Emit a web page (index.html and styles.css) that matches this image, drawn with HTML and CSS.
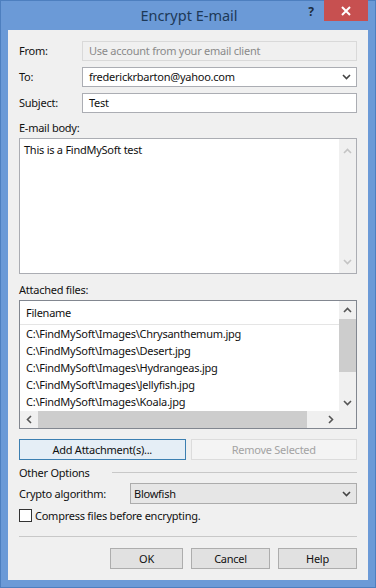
FILE: index.html
```html
<!DOCTYPE html>
<html>
<head>
<meta charset="utf-8">
<link rel="stylesheet" href="styles.css">
</head>
<body>
<div class="window">
  <div class="titlebar">
    <div class="title">Encrypt E-mail</div>
    <div class="controls">
      <span class="help-btn">?</span>
      <span class="close-btn"><svg width="10" height="10" viewBox="0 0 10 10"><path d="M1 1L9 9M9 1L1 9" stroke="#fff" stroke-width="2"/></svg></span>
    </div>
  </div>
  <div class="client">
    <div class="fields">
      <label class="lbl">From:</label>
      <div class="input disabled">Use account from your email client</div>
      <label class="lbl">To:</label>
      <div class="input combo">frederickrbarton@yahoo.com<span class="chev"><svg width="9" height="6" viewBox="0 0 9 6"><path d="M1 1L4.5 4.5L8 1" stroke="#444" stroke-width="1.6" fill="none"/></svg></span></div>
      <label class="lbl">Subject:</label>
      <div class="input">Test</div>
    </div>
    <div class="section-label body-label">E-mail body:</div>
    <div class="textarea">
      <div class="ta-text">This is a FindMySoft test</div>
      <div class="vscroll light">
        <svg class="arr" width="9" height="6" viewBox="0 0 9 6"><path d="M1 5L4.5 1.5L8 5" stroke="#c4c4c4" stroke-width="1.6" fill="none"/></svg>
        <svg class="arr" width="9" height="6" viewBox="0 0 9 6"><path d="M1 1L4.5 4.5L8 1" stroke="#c4c4c4" stroke-width="1.6" fill="none"/></svg>
      </div>
    </div>
    <div class="section-label att-label">Attached files:</div>
    <div class="listbox">
      <div class="lb-main">
        <div class="lb-content">
          <div class="lb-header">Filename</div>
          <div class="lb-rows">
            <div class="row">C:\FindMySoft\Images\Chrysanthemum.jpg</div>
            <div class="row">C:\FindMySoft\Images\Desert.jpg</div>
            <div class="row">C:\FindMySoft\Images\Hydrangeas.jpg</div>
            <div class="row">C:\FindMySoft\Images\Jellyfish.jpg</div>
            <div class="row">C:\FindMySoft\Images\Koala.jpg</div>
          </div>
        </div>
        <div class="vscroll">
          <div class="sb-btn"><svg width="9" height="6" viewBox="0 0 9 6"><path d="M1 5L4.5 1.5L8 5" stroke="#555" stroke-width="1.6" fill="none"/></svg></div>
          <div class="sb-track"><div class="sb-thumb-v"></div></div>
          <div class="sb-btn"><svg width="9" height="6" viewBox="0 0 9 6"><path d="M1 1L4.5 4.5L8 1" stroke="#555" stroke-width="1.6" fill="none"/></svg></div>
        </div>
      </div>
      <div class="hscroll">
        <div class="sb-btn-h"><svg width="6" height="9" viewBox="0 0 6 9"><path d="M5 1L1.5 4.5L5 8" stroke="#555" stroke-width="1.6" fill="none"/></svg></div>
        <div class="sb-track-h"><div class="sb-thumb-h"></div></div>
        <div class="sb-btn-h"><svg width="6" height="9" viewBox="0 0 6 9"><path d="M1 1L4.5 4.5L1 8" stroke="#555" stroke-width="1.6" fill="none"/></svg></div>
        <div class="corner"></div>
      </div>
    </div>
    <div class="btn-row">
      <button class="btn focused">Add Attachment(s)...</button>
      <button class="btn disabled-btn">Remove Selected</button>
    </div>
    <div class="group-title"><span>Other Options</span><div class="gline"></div></div>
    <div class="crypto-row">
      <span class="lbl">Crypto algorithm:</span>
      <div class="select">Blowfish<span class="chev"><svg width="9" height="6" viewBox="0 0 9 6"><path d="M1 1L4.5 4.5L8 1" stroke="#444" stroke-width="1.6" fill="none"/></svg></span></div>
    </div>
    <div class="check-row">
      <span class="checkbox"></span>
      <span>Compress files before encrypting.</span>
    </div>
    <div class="sep"></div>
    <div class="footer">
      <button class="btn fbtn">OK</button>
      <button class="btn fbtn">Cancel</button>
      <button class="btn fbtn">Help</button>
    </div>
  </div>
</div>
</body>
</html>
```

FILE: styles.css
```css
* { box-sizing: border-box; }
html, body { margin: 0; padding: 0; }
body {
  width: 376px;
  height: 588px;
  font-family: "Noto Sans", "Open Sans", sans-serif;
  font-size: 11px;
  letter-spacing: -0.25px;
  color: #111;
  overflow: hidden;
}
.window {
  width: 376px;
  height: 588px;
  background: #6b9ad7;
  border: 1px solid #4d7fbf;
  display: flex;
  flex-direction: column;
}
.titlebar {
  position: relative;
  height: 29px;
  flex: none;
}
.title {
  text-align: center;
  font-size: 14.5px;
  letter-spacing: 0;
  color: #1d3957;
  line-height: 29px;
  padding-left: 2px;
}
.controls {
  position: absolute;
  right: 7px;
  top: -1px;
  display: flex;
  align-items: flex-start;
}
.help-btn {
  width: 26px;
  text-align: center;
  font-weight: bold;
  font-size: 12px;
  color: #1d2d40;
  line-height: 24px;
}
.close-btn {
  width: 44px;
  height: 21px;
  background: #c75050;
  display: flex;
  align-items: center;
  justify-content: center;
}
.client {
  flex: 1;
  margin: 0 7px 7px 7px;
  background: #f0f0f0;
  padding: 11px 11px 0 11px;
  display: flex;
  flex-direction: column;
}
.fields {
  display: grid;
  grid-template-columns: 63px 1fr;
  row-gap: 6px;
  align-items: center;
}
.lbl { line-height: 20px; }
.input {
  height: 20px;
  border: 1px solid #abadb3;
  background: #fff;
  padding: 0 6px;
  line-height: 18px;
  position: relative;
  white-space: nowrap;
}
.input.disabled {
  background: #f0f0f0;
  border-color: #d9d9d9;
  color: #8a8a8a;
}
.chev {
  position: absolute;
  right: 5px;
  top: 0;
  height: 100%;
  display: flex;
  align-items: center;
}
.section-label { line-height: 14px; }
.body-label { margin-top: 8px; }
.textarea {
  margin-top: 3px;
  height: 136px;
  border: 1px solid #abadb3;
  background: #fff;
  display: flex;
}
.ta-text {
  flex: 1;
  padding: 3px 4px;
  line-height: 15px;
}
.vscroll {
  width: 17px;
  display: flex;
  flex-direction: column;
  background: #f0f0f0;
}
.vscroll.light {
  justify-content: space-between;
  align-items: center;
  padding: 9px 0 8px;
}
.att-label { margin-top: 9px; }
.listbox {
  margin-top: 3px;
  height: 129px;
  border: 1px solid #828790;
  background: #fff;
  display: flex;
  flex-direction: column;
}
.lb-main { flex: 1; display: flex; min-height: 0; }
.lb-content { flex: 1; overflow: hidden; }
.lb-header {
  height: 24px;
  line-height: 23px;
  padding-left: 6px;
  border-bottom: 1px solid #e5e5e5;
}
.lb-rows { padding-top: 0; }
.row {
  height: 17px;
  line-height: 17px;
  padding-left: 6px;
  white-space: nowrap;
}
.sb-btn {
  height: 17px;
  display: flex;
  align-items: center;
  justify-content: center;
}
.sb-track { flex: 1; display: flex; flex-direction: column; }
.sb-thumb-v {
  margin-top: 1px;
  height: 53px;
  background: #cdcdcd;
}
.hscroll {
  height: 17px;
  display: flex;
  background: #f0f0f0;
}
.sb-btn-h {
  width: 17px;
  display: flex;
  align-items: center;
  justify-content: center;
}
.sb-track-h { flex: 1; display: flex; align-items: stretch; }
.sb-thumb-h { width: 269px; background: #cdcdcd; margin: 0 0 0 1px; }
.corner { width: 17px; background: #f0f0f0; }
.btn {
  font-family: inherit;
  font-size: 11px;
  letter-spacing: -0.25px;
  color: #111;
  background: #e1e1e1;
  border: 1px solid #adadad;
  height: 21px;
  padding: 0;
  margin: 0;
}
.btn-row {
  margin-top: 10px;
  display: grid;
  grid-template-columns: 1fr 1fr;
  column-gap: 5px;
}
.btn.focused {
  border-color: #3c7fb1;
  background: #e5eef6;
}
.btn.disabled-btn {
  background: #f4f4f4;
  border-color: #dcdcdc;
  color: #a3a3a3;
}
.group-title {
  margin-top: 5px;
  display: flex;
  align-items: center;
  line-height: 15px;
}
.group-title .gline {
  flex: 1;
  margin-left: 22px;
  border-top: 1px solid #c8c8c8;
  height: 0;
}
.crypto-row {
  margin-top: 3px;
  display: grid;
  grid-template-columns: 111px 1fr;
  align-items: center;
}
.select {
  height: 21px;
  border: 1px solid #acacac;
  background: #e6e6e6;
  line-height: 19px;
  padding-left: 3px;
  position: relative;
}
.check-row {
  margin-top: 5px;
  display: flex;
  align-items: center;
  line-height: 13px;
}
.checkbox {
  width: 13px;
  height: 13px;
  border: 1px solid #333;
  background: #fff;
  margin-right: 3px;
}
.sep {
  margin-top: 14px;
  border-top: 1px solid #c8c8c8;
}
.footer {
  margin-top: 11px;
  display: flex;
  justify-content: flex-end;
  gap: 8px;
}
.fbtn { width: 73px; height: 21px; }
.footer .fbtn:nth-child(2), .footer .fbtn:nth-child(3) { width: 79px; }
```
